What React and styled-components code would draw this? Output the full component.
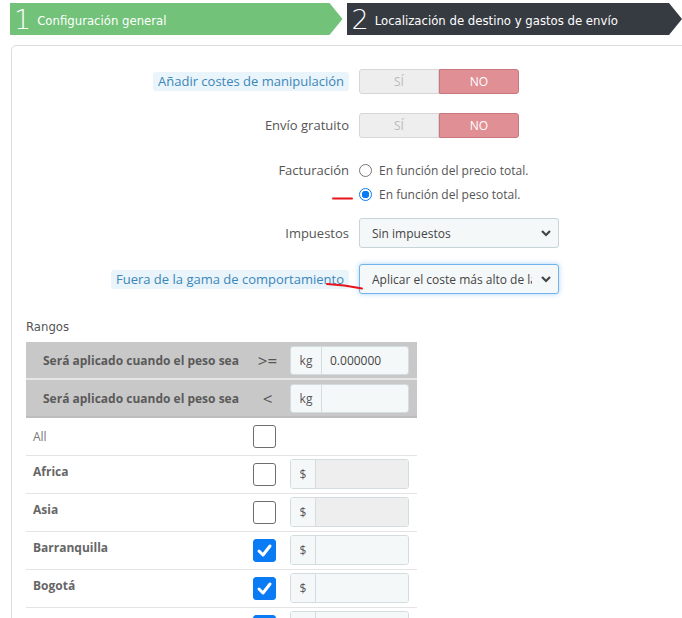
import React from "react"
import styled, { createGlobalStyle } from "styled-components"

const GlobalStyle = createGlobalStyle`
  html, body {
    margin: 0;
    padding: 0;
    background: #fff;
    overflow: hidden;
  }
  body {
    font-family: "Open Sans", "Liberation Sans", sans-serif;
    color: #555;
  }
`

const regions = [
  { name: "Africa", checked: false },
  { name: "Asia", checked: false },
  { name: "Barranquilla", checked: true },
  { name: "Bogotá", checked: true },
  { name: "Cali", checked: true },
]

const App = () => {
  return (
    <Page>
      <GlobalStyle />
      <Steps>
        <Step done>
          <StepNum>1</StepNum>
          <StepText>Configuración general</StepText>
        </Step>
        <Step>
          <StepNum>2</StepNum>
          <StepText>Localización de destino y gastos de envío</StepText>
        </Step>
      </Steps>

      <Panel>
        <FormRow gap="19px">
          <Label hint>Añadir costes de manipulación</Label>
          <Switch>
            <SwitchSide>SÍ</SwitchSide>
            <SwitchSide active>NO</SwitchSide>
          </Switch>
        </FormRow>

        <FormRow gap="20px">
          <Label>Envío gratuito</Label>
          <Switch>
            <SwitchSide>SÍ</SwitchSide>
            <SwitchSide active>NO</SwitchSide>
          </Switch>
        </FormRow>

        <FormRow gap="12px" top>
          <Label top>Facturación</Label>
          <Radios>
            <RadioLine>
              <Radio />
              En función del precio total.
            </RadioLine>
            <RadioLine>
              <Radio checked />
              En función del peso total.
            </RadioLine>
          </Radios>
        </FormRow>

        <FormRow gap="16px">
          <Label>Impuestos</Label>
          <Select>
            <SelectText>Sin impuestos</SelectText>
            <Chevron />
          </Select>
        </FormRow>

        <FormRow gap="25px">
          <Label hint>Fuera de la gama de comportamiento</Label>
          <Select focused>
            <SelectText>Aplicar el coste más alto de la</SelectText>
            <Chevron />
          </Select>
        </FormRow>

        <Ranges>
          <RangesTitle>Rangos</RangesTitle>
          <Table>
            <HeadRow>
              <HeadLabel>Será aplicado cuando el peso sea</HeadLabel>
              <Operator>&gt;=</Operator>
              <InputGroup>
                <Addon wide>kg</Addon>
                <Field>0.000000</Field>
              </InputGroup>
            </HeadRow>
            <HeadRow>
              <HeadLabel>Será aplicado cuando el peso sea</HeadLabel>
              <Operator>&lt;</Operator>
              <InputGroup>
                <Addon wide>kg</Addon>
                <Field />
              </InputGroup>
            </HeadRow>
            <BodyRow>
              <ZoneName all>All</ZoneName>
              <CheckCell>
                <Checkbox />
              </CheckCell>
              <div />
            </BodyRow>
            {regions.map((r) => (
              <BodyRow key={r.name}>
                <ZoneName>{r.name}</ZoneName>
                <CheckCell>
                  <Checkbox checked={r.checked}>
                    {r.checked && <Tick />}
                  </Checkbox>
                </CheckCell>
                <InputGroup small>
                  <Addon>$</Addon>
                  <Field disabled={!r.checked} />
                </InputGroup>
              </BodyRow>
            ))}
          </Table>
        </Ranges>
      </Panel>

      <Marks width="682" height="618" viewBox="0 0 682 618">
        <path d="M333 198.5 L352 198.5" stroke="#e8141b" strokeWidth="2" fill="none" strokeLinecap="round" />
        <path d="M327 284 C338 284.5 350 286 362 288.5" stroke="#e8141b" strokeWidth="2" fill="none" strokeLinecap="round" />
      </Marks>
    </Page>
  )
}

const Tick = () => (
  <svg width="17" height="17" viewBox="0 0 17 17">
    <path d="M3 9 L7 13 L14 4" stroke="#fff" strokeWidth="3" fill="none" strokeLinecap="round" strokeLinejoin="round" />
  </svg>
)

const Chevron = () => (
  <svg width="12" height="12" viewBox="0 0 12 12" style={{ flexShrink: 0 }}>
    <path d="M2 4 L6 8 L10 4" stroke="#444" strokeWidth="2.2" fill="none" />
  </svg>
)

export default App

const Page = styled.div`
  position: relative;
  width: 682px;
  height: 618px;
  padding-top: 3px;
  box-sizing: border-box;
  overflow: hidden;
`

const Steps = styled.div`
  display: flex;
  gap: 4px;
  padding-left: 10px;
  height: 32px;
`

const Step = styled.div`
  display: flex;
  align-items: center;
  width: ${(p) => (p.done ? "333px" : "336px")};
  height: 32px;
  padding-left: ${(p) => (p.done ? "4px" : "5px")};
  box-sizing: border-box;
  background: ${(p) => (p.done ? "#72c279" : "#363a41")};
  color: #fff;
  clip-path: polygon(0 0, calc(100% - 13px) 0, 100% 50%, calc(100% - 13px) 100%, 0 100%);
  font-family: "DejaVu Sans Condensed", "DejaVu Sans", sans-serif;
`

const StepNum = styled.span`
  font-family: "DejaVu Sans", sans-serif;
  font-weight: 200;
  font-size: 27px;
  line-height: 32px;
  margin-right: 6px;
  margin-top: 2px;
`

const StepText = styled.span`
  font-size: 13px;
  font-stretch: condensed;
  margin-top: 2px;
`

const Panel = styled.div`
  margin: 10px 0 0 11px;
  width: 720px;
  height: 600px;
  border: 1px solid #dcdcdc;
  border-radius: 5px 0 0 0;
  padding-top: 23px;
  box-sizing: border-box;
`

const FormRow = styled.div`
  display: grid;
  grid-template-columns: 337px 200px;
  column-gap: 10px;
  align-items: ${(p) => (p.top ? "start" : "center")};
  margin-bottom: ${(p) => p.gap};
`

const Label = styled.div`
  justify-self: end;
  font-size: 13px;
  line-height: 19px;
  padding: 0 ${(p) => (p.hint ? "5px" : "0")};
  border-radius: 3px;
  background: ${(p) => (p.hint ? "#eaf4fb" : "transparent")};
  color: ${(p) => (p.hint ? "#3a87b8" : "#555")};
  margin-top: ${(p) => (p.top ? "3px" : "0")};
`

const Switch = styled.div`
  display: flex;
  width: 160px;
  height: 25px;
`

const SwitchSide = styled.div`
  flex: 1;
  display: flex;
  align-items: center;
  justify-content: center;
  font-size: 12px;
  box-sizing: border-box;
  border: 1px solid ${(p) => (p.active ? "#c9777d" : "#d6d6d6")};
  border-radius: ${(p) => (p.active ? "0 3px 3px 0" : "3px 0 0 3px")};
  background: ${(p) => (p.active ? "#e08f95" : "#eeeeee")};
  color: ${(p) => (p.active ? "#fff" : "#bbb")};
`

const Radios = styled.div`
  display: flex;
  flex-direction: column;
`

const RadioLine = styled.div`
  display: flex;
  align-items: center;
  height: 24px;
  font-size: 12px;
  color: #555;
`

const Radio = styled.span`
  width: 13px;
  height: 13px;
  box-sizing: border-box;
  border-radius: 50%;
  margin: 0 7px 0 0;
  border: 1px solid ${(p) => (p.checked ? "#0a7bf5" : "#767676")};
  background: ${(p) => (p.checked ? "radial-gradient(circle, #0a7bf5 0 3.5px, #fff 4px)" : "#fff")};
`

const Select = styled.div`
  display: flex;
  align-items: center;
  justify-content: space-between;
  width: 200px;
  height: 30px;
  box-sizing: border-box;
  padding: 0 6px 0 12px;
  background: #f5f8f9;
  border: 1px solid ${(p) => (p.focused ? "#72b3ec" : "#c7d4d8")};
  border-radius: 3px;
  box-shadow: ${(p) => (p.focused ? "0 0 5px rgba(60, 150, 240, 0.45)" : "none")};
`

const SelectText = styled.span`
  font-size: 12px;
  color: #444;
  white-space: nowrap;
  overflow: hidden;
  width: 160px;
`

const Ranges = styled.div`
  padding-left: 14px;
`

const RangesTitle = styled.div`
  font-family: "DejaVu Sans Condensed", "DejaVu Sans", sans-serif;
  font-stretch: condensed;
  font-size: 13px;
  color: #555;
  line-height: 18px;
  margin-top: -1px;
  margin-bottom: 6px;
`

const Table = styled.div`
  width: 391px;
`

const HeadRow = styled.div`
  display: grid;
  grid-template-columns: 219px 45px 119px;
  align-items: center;
  height: 36px;
  background: #c8c8c8;
  border-bottom: 2px solid #e6e6e6;
  &:nth-child(2) {
    border-bottom: 2px solid #bdbdbd;
  }
`

const HeadLabel = styled.div`
  padding-left: 17px;
  font-size: 12px;
  font-weight: 700;
  color: #5a5a5a;
`

const Operator = styled.div`
  text-align: center;
  font-size: 17px;
  color: #555;
`

const InputGroup = styled.div`
  display: flex;
  width: 119px;
  height: ${(p) => (p.small ? "30px" : "29px")};
  box-sizing: border-box;
  border: 1px solid #d3dde0;
  border-radius: 3px;
  overflow: hidden;
  margin-top: ${(p) => (p.small ? "3px" : "0")};
`

const Addon = styled.div`
  width: ${(p) => (p.wide ? "30px" : "24px")};
  display: flex;
  align-items: center;
  justify-content: center;
  font-size: 12px;
  color: #555;
  background: #f5f8f9;
  border-right: 1px solid #d3dde0;
`

const Field = styled.div`
  flex: 1;
  display: flex;
  align-items: center;
  padding-left: 8px;
  font-size: 12px;
  color: #444;
  background: ${(p) => (p.disabled ? "#eeeeee" : "#f5f8f9")};
`

const BodyRow = styled.div`
  display: grid;
  grid-template-columns: 219px 45px 119px;
  align-items: start;
  height: 37px;
  border-bottom: 1px solid #e4e4e4;
`

const ZoneName = styled.div`
  padding: ${(p) => (p.all ? "12px" : "9px")} 0 0 7px;
  font-size: 12px;
  line-height: 14px;
  font-weight: ${(p) => (p.all ? 400 : 700)};
  color: ${(p) => (p.all ? "#777" : "#666")};
`

const CheckCell = styled.div`
  padding: 7px 0 0 8px;
`

const Checkbox = styled.div`
  width: 23px;
  height: 23px;
  box-sizing: border-box;
  border-radius: 3px;
  display: flex;
  align-items: center;
  justify-content: center;
  border: 1px solid ${(p) => (p.checked ? "#0a7bf5" : "#6e6e6e")};
  background: ${(p) => (p.checked ? "#0a7bf5" : "#fff")};
`

const Marks = styled.svg`
  position: absolute;
  top: 0;
  left: 0;
  pointer-events: none;
`
